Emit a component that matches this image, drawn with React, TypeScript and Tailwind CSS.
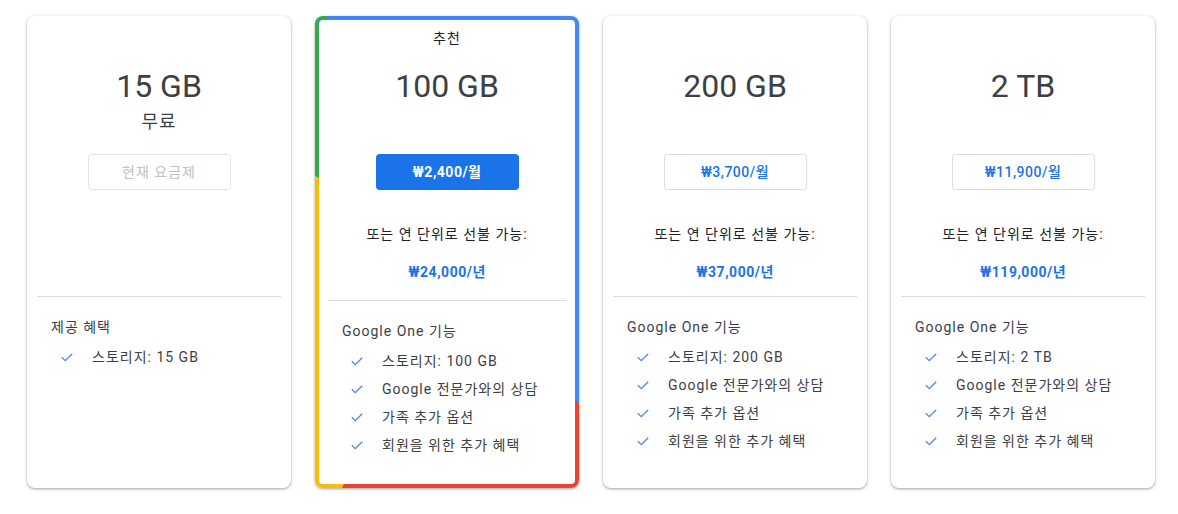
import React from "react";

type Plan = {
  size: string;
  sub?: string;
  price?: string;
  annual?: string;
  featured?: boolean;
  current?: boolean;
  heading: string;
  features: string[];
};

const plans: Plan[] = [
  { size: "15 GB", sub: "무료", current: true, heading: "제공 혜택", features: ["스토리지: 15 GB"] },
  {
    size: "100 GB",
    price: "₩2,400/월",
    annual: "₩24,000/년",
    featured: true,
    heading: "Google One 기능",
    features: ["스토리지: 100 GB", "Google 전문가와의 상담", "가족 추가 옵션", "회원을 위한 추가 혜택"],
  },
  {
    size: "200 GB",
    price: "₩3,700/월",
    annual: "₩37,000/년",
    heading: "Google One 기능",
    features: ["스토리지: 200 GB", "Google 전문가와의 상담", "가족 추가 옵션", "회원을 위한 추가 혜택"],
  },
  {
    size: "2 TB",
    price: "₩11,900/월",
    annual: "₩119,000/년",
    heading: "Google One 기능",
    features: ["스토리지: 2 TB", "Google 전문가와의 상담", "가족 추가 옵션", "회원을 위한 추가 혜택"],
  },
];

function Check() {
  return (
    <svg width="12" height="9" viewBox="0 0 12 9" fill="none" className="shrink-0">
      <path d="M0.8 4.2 L4.3 7.6 L11.2 0.8" stroke="#4a84ee" strokeWidth="1.3" />
    </svg>
  );
}

function CardBody({ plan }: { plan: Plan }) {
  const f = plan.featured;
  return (
    <div className="flex flex-col h-full">
      <div className={`flex flex-col items-center h-[280px] ${f ? "pt-[8px]" : "pt-[50px]"}`}>
        {f && <div className="h-[20px] leading-[20px] text-[14px] tracking-[1px] text-[#202124]">추천</div>}
        <div className={`h-[40px] leading-[40px] text-[32px] text-[#3c4043] ${f ? "mt-[18px]" : ""}`}>{plan.size}</div>
        <div className="h-[48px] pt-[4px]">
          {plan.sub && <div className="leading-[24px] text-[18px] tracking-[1px] text-[#3c4043]">{plan.sub}</div>}
        </div>
        {plan.current ? (
          <div className="w-[143px] h-[36px] rounded-[4px] border border-[#e3e3e3] flex items-center justify-center text-[14px] tracking-[1px] text-[#c4c0c0]">
            현재 요금제
          </div>
        ) : f ? (
          <div className="w-[143px] h-[36px] rounded-[4px] bg-[#1a73e8] flex items-center justify-center text-[14px] tracking-[0.5px] font-bold text-white">
            {plan.price}
          </div>
        ) : (
          <div className="w-[143px] h-[36px] rounded-[4px] border border-[#dadce0] flex items-center justify-center text-[14px] tracking-[0.5px] font-medium text-[#1a73e8]">
            {plan.price}
          </div>
        )}
        {plan.annual && (
          <>
            <div className="mt-[34px] leading-[20px] text-[14px] tracking-[1px] text-[#202124]">또는 연 단위로 선불 가능:</div>
            <div className="mt-[18px] leading-[20px] text-[14px] tracking-[0.5px] font-bold text-[#1a73e8]">{plan.annual}</div>
          </>
        )}
      </div>
      <div className={`h-px bg-[#dadce0] ${f ? "mx-[9px]" : "mx-[10px]"}`} />
      <div className={`pt-[20px] ${f ? "pl-[23px]" : "pl-[24px]"}`}>
        <div className="leading-[20px] text-[14px] tracking-[1px] text-[#3c4043]">{plan.heading}</div>
        <div className={`mt-[6px] flex flex-col ${f ? "pl-[9px]" : "pl-[10px]"}`}>
          {plan.features.map((t) => (
            <div key={t} className="h-[28px] flex items-center gap-[19px] text-[14px] tracking-[1px] text-[#3c4043]">
              <Check />
              <span>{t}</span>
            </div>
          ))}
        </div>
      </div>
    </div>
  );
}

export default function App() {
  return (
    <div className="w-[1178px] h-[514px] bg-white pt-[16px] pl-[27px] font-['Roboto','Noto_Sans_CJK_KR',sans-serif]">
      <div className="flex gap-[24px]">
        {plans.map((p) =>
          p.featured ? (
            <div
              key={p.size}
              className="w-[264px] h-[472px] rounded-[8px] p-[4px] shadow-[0_1px_2px_rgba(60,64,67,0.3),0_1px_3px_1px_rgba(60,64,67,0.15)] bg-[conic-gradient(#4285f4_0deg_139deg,#ea4335_139deg_204deg,#fbbc04_204deg_300deg,#34a853_300deg_333deg,#4285f4_333deg_360deg)]"
            >
              <div className="h-full bg-white rounded-[4px]">
                <CardBody plan={p} />
              </div>
            </div>
          ) : (
            <div
              key={p.size}
              className="w-[264px] h-[472px] rounded-[8px] bg-white shadow-[0_1px_2px_rgba(60,64,67,0.3),0_1px_3px_1px_rgba(60,64,67,0.15)]"
            >
              <CardBody plan={p} />
            </div>
          )
        )}
      </div>
    </div>
  );
}
